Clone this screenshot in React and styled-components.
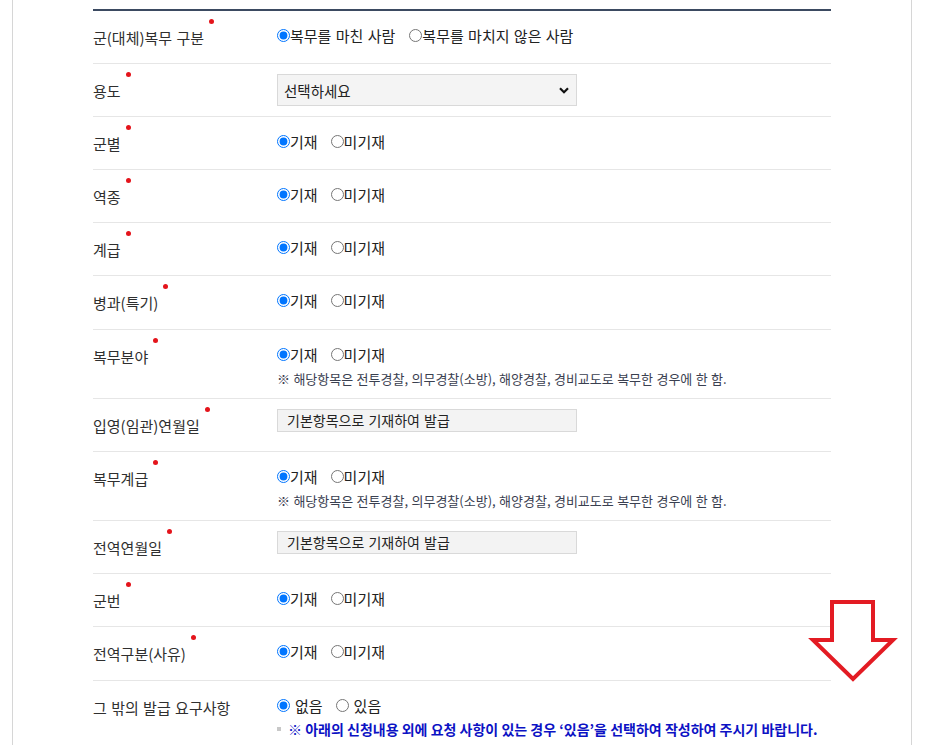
import React from "react";
import styled, { createGlobalStyle } from "styled-components";

const Global = createGlobalStyle`
  html, body { margin: 0; padding: 0; background: #fff; }
  body { font-family: "Noto Sans CJK KR", "Noto Sans", sans-serif; color: #333; }
  * { box-sizing: border-box; }
`;

const Page = styled.div`
  position: relative;
  margin-left: 12px;
  width: 900px;
  min-height: 760px;
  border-left: 1px solid #d6d6d6;
  border-right: 1px solid #d6d6d6;
  padding: 9px 80px 0;
`;

const Table = styled.div`
  border-top: 2px solid #3b4a61;
  display: flex;
  flex-direction: column;
`;

const Row = styled.div`
  display: grid;
  grid-template-columns: 184px 1fr;
  min-height: ${(p) => (p.$tall ? "53px" : "52px")};
  border-bottom: 1px solid #e6e6e6;
  box-sizing: content-box;
`;

const Label = styled.div`
  padding-top: 17px;
  font-size: 15px;
  line-height: 20px;
  color: #2f2f2f;
  word-spacing: 1px;
`;

const LabelText = styled.span`
  position: relative;
  &::after {
    content: ${(p) => (p.$req ? '""' : "none")};
    position: absolute;
    right: -10px;
    top: -8px;
    width: 5px;
    height: 5px;
    border-radius: 50%;
    background: #e4141b;
  }
`;

const Value = styled.div`
  padding: 10px 0 10px;
  display: flex;
  flex-direction: column;
  align-items: flex-start;
`;

const RadioLine = styled.div`
  display: flex;
  align-items: center;
  height: 28px;
  font-size: 15px;
  color: #222;
  word-spacing: 1px;
`;

const Option = styled.label`
  display: inline-flex;
  align-items: center;
  margin-right: ${(p) => (p.$wide ? "14px" : "13px")};
  gap: ${(p) => (p.$spaced ? "5px" : "0")};
  cursor: pointer;
`;

const Radio = styled.input.attrs({ type: "radio" })`
  width: 13px;
  height: 13px;
  margin: 0;
`;

const Note = styled.div`
  display: flex;
  align-items: center;
  height: 20px;
  font-size: 13px;
  color: #3a4050;
  word-spacing: 0.5px;
`;

const BlueNote = styled.div`
  display: flex;
  align-items: center;
  height: 20px;
  font-size: 14px;
  font-weight: 700;
  color: #0c12c4;
  gap: 7px;
`;

const Bullet = styled.span`
  width: 4px;
  height: 4px;
  background: #c8c8c8;
`;

const SelectWrap = styled.div`
  position: relative;
  width: 300px;
  height: 32px;
`;

const Select = styled.select`
  appearance: none;
  width: 100%;
  height: 100%;
  border: 1px solid #d9d9d9;
  background: #f4f4f4;
  font-family: inherit;
  font-size: 14.5px;
  color: #222;
  padding: 0 6px;
  border-radius: 0;
  outline: none;
`;

const Chevron = styled.svg`
  position: absolute;
  right: 8px;
  top: 13px;
  pointer-events: none;
`;

const ReadOnly = styled.div`
  width: 300px;
  height: 23px;
  border: 1px solid #d9d9d9;
  background: #f3f3f3;
  font-size: 14px;
  line-height: 21px;
  padding-left: 9px;
  color: #222;
  word-spacing: 1px;
`;

const Arrow = styled.svg`
  position: absolute;
  left: 794px;
  top: 596px;
`;

const NOTE = "※ 해당항목은 전투경찰, 의무경찰(소방), 해양경찰, 경비교도로 복무한 경우에 한 함.";

function YesNo({ name }) {
  return (
    <RadioLine>
      <Option>
        <Radio name={name} defaultChecked />
        기재
      </Option>
      <Option>
        <Radio name={name} />
        미기재
      </Option>
    </RadioLine>
  );
}

function FormRow({ label, req = true, tall = false, children }) {
  return (
    <Row $tall={tall}>
      <Label>
        <LabelText $req={req}>{label}</LabelText>
      </Label>
      <Value>{children}</Value>
    </Row>
  );
}

export default function App() {
  return (
    <>
      <Global />
      <Page>
        <Table>
          <FormRow label="군(대체)복무 구분">
            <RadioLine>
              <Option $wide>
                <Radio name="svc" defaultChecked />
                복무를 마친 사람
              </Option>
              <Option>
                <Radio name="svc" />
                복무를 마치지 않은 사람
              </Option>
            </RadioLine>
          </FormRow>
          <FormRow label="용도">
            <SelectWrap>
              <Select defaultValue="">
                <option value="">선택하세요</option>
              </Select>
              <Chevron width="10" height="7" viewBox="0 0 10 7">
                <path d="M1 1.2 L5 5.2 L9 1.2" fill="none" stroke="#111" strokeWidth="2.2" />
              </Chevron>
            </SelectWrap>
          </FormRow>
          <FormRow label="군별">
            <YesNo name="a" />
          </FormRow>
          <FormRow label="역종">
            <YesNo name="b" />
          </FormRow>
          <FormRow label="계급">
            <YesNo name="c" />
          </FormRow>
          <FormRow label="병과(특기)" tall>
            <YesNo name="d" />
          </FormRow>
          <FormRow label="복무분야">
            <YesNo name="e" />
            <Note>{NOTE}</Note>
          </FormRow>
          <FormRow label="입영(임관)연월일">
            <ReadOnly>기본항목으로 기재하여 발급</ReadOnly>
          </FormRow>
          <FormRow label="복무계급">
            <YesNo name="f" />
            <Note>{NOTE}</Note>
          </FormRow>
          <FormRow label="전역연월일">
            <ReadOnly>기본항목으로 기재하여 발급</ReadOnly>
          </FormRow>
          <FormRow label="군번">
            <YesNo name="g" />
          </FormRow>
          <FormRow label="전역구분(사유)" tall>
            <YesNo name="h" />
          </FormRow>
          <FormRow label="그 밖의 발급 요구사항" req={false}>
            <RadioLine>
              <Option $spaced>
                <Radio name="etc" defaultChecked />
                없음
              </Option>
              <Option $spaced>
                <Radio name="etc" />
                있음
              </Option>
            </RadioLine>
            <BlueNote>
              <Bullet />
              ※ 아래의 신청내용 외에 요청 사항이 있는 경우 ‘있음’을 선택하여 작성하여 주시기 바랍니다.
            </BlueNote>
          </FormRow>
        </Table>
        <Arrow width="92" height="90" viewBox="0 0 92 90">
          <polygon
            points="25,6 66,6 66,44 86,44 46,83 6,44 25,44"
            fill="#fff"
            stroke="#e31b23"
            strokeWidth="4"
            strokeLinejoin="miter"
          />
        </Arrow>
      </Page>
    </>
  );
}
